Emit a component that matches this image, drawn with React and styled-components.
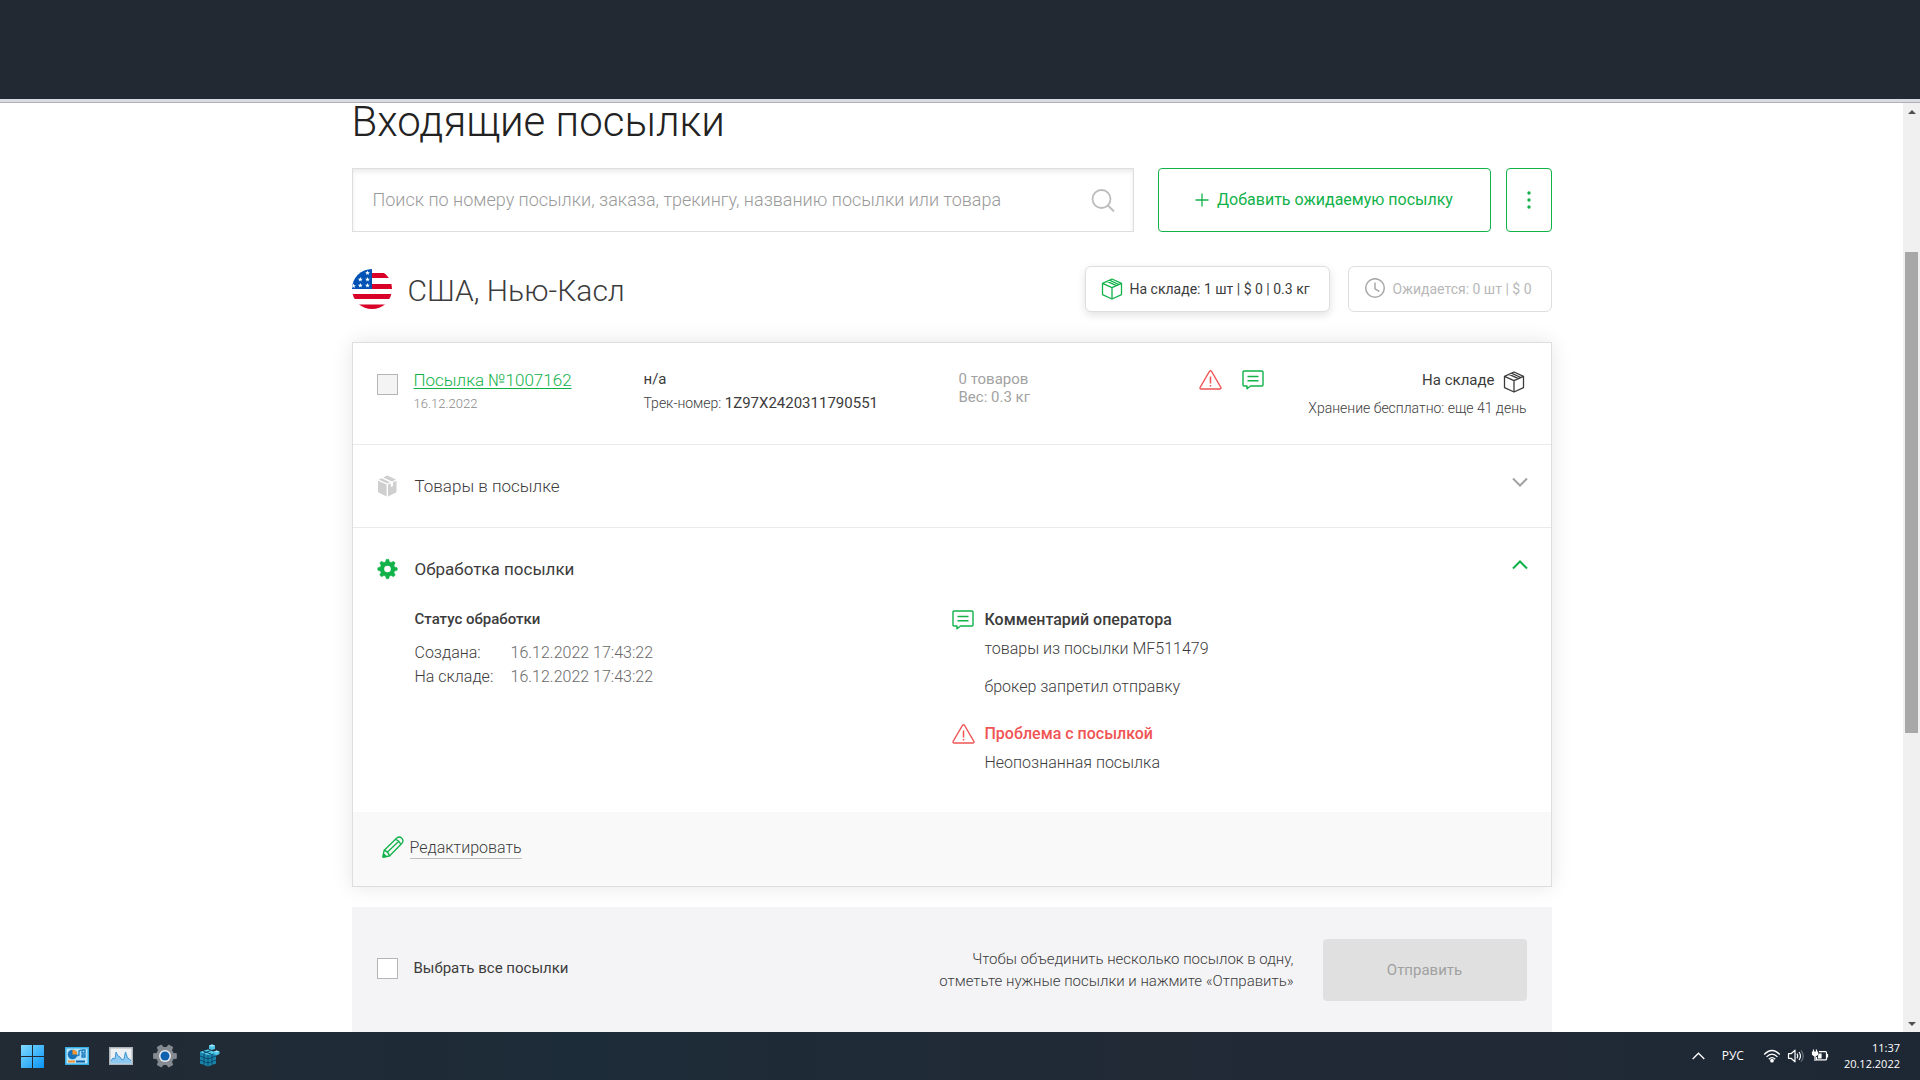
import React from "react";
import styled, { createGlobalStyle } from "styled-components";

const GREEN = "#12b24a";
const RED = "#f05454";
const TEXT = "#3c3c3c";

const GlobalStyle = createGlobalStyle`
  * { box-sizing: border-box; }
  html, body { margin: 0; height: 100%; overflow: hidden; background: #fff; }
  body { font-family: Roboto, "Liberation Sans", sans-serif; color: ${TEXT}; }
  h1, h2, h3, p, dl, dd, dt { margin: 0; font-weight: inherit; }
  button, input { font-family: inherit; }
  svg { display: block; flex: none; }
`;

const Screen = styled.div`
  display: flex;
  flex-direction: column;
  height: 100vh;
`;
const BrowserChrome = styled.div`
  flex: none;
  height: 103px;
  background: #222933;
  border-bottom: 1px solid #b0b0b6;
  box-shadow: inset 0 -3px 0 #dadae2;
`;
const Viewport = styled.div`
  flex: 1;
  min-height: 0;
  display: flex;
`;
const Page = styled.main`
  flex: 1;
  min-width: 0;
`;
const Container = styled.div`
  max-width: 1200px;
  margin: 0 auto;
`;

const Title = styled.h1`
  font-size: 42px;
  line-height: 38px;
  font-weight: 300;
  color: #222;
  margin-bottom: 27px;
`;

const SearchRow = styled.div`
  display: flex;
  margin-bottom: 34px;
`;
const SearchBox = styled.label`
  flex: 1;
  height: 64px;
  display: flex;
  align-items: center;
  padding: 0 18px 0 20px;
  margin-right: 24px;
  border: 1px solid #dedede;
  box-shadow: inset 0 3px 4px #ececec;
`;
const SearchInput = styled.input`
  flex: 1;
  border: 0;
  padding: 0;
  outline: 0;
  background: transparent;
  font-size: 18px;
  line-height: 24px;
  font-weight: 300;
  &::placeholder { color: #9a9a9a; opacity: 1; }
`;
const OutlineButton = styled.button`
  display: flex;
  align-items: center;
  justify-content: center;
  gap: 8px;
  height: 64px;
  width: ${(p) => p.$width};
  padding: 0;
  border: 1px solid ${GREEN};
  border-radius: 4px;
  background: #fff;
  color: ${GREEN};
  font-size: 16px;
  line-height: 24px;
  & + & { margin-left: 15px; }
`;

const CountryRow = styled.div`
  display: flex;
  align-items: center;
  height: 46px;
  margin-bottom: 30px;
`;
const CountryName = styled.h2`
  flex: 1;
  margin-left: 16px;
  padding-top: 4px;
  font-size: 30px;
  line-height: 40px;
  font-weight: 300;
`;
const Counter = styled.button`
  display: flex;
  align-items: center;
  gap: 7px;
  height: 46px;
  padding: 0 19px 0 15px;
  border: 1px solid #dedede;
  border-radius: 6px;
  background: #fff;
  font-size: 14px;
  line-height: 20px;
  color: ${(p) => (p.$active ? TEXT : "#b8b8b8")};
  box-shadow: ${(p) => (p.$active ? "0 3px 8px rgba(0,0,0,.12)" : "none")};
  & + & { margin-left: 18px; }
`;

const Card = styled.article`
  border: 1px solid #dedede;
  background: #fff;
  box-shadow: 0 0 20px rgba(0, 0, 0, 0.1);
  margin-bottom: 20px;
`;
const Summary = styled.div`
  display: grid;
  grid-template-columns: 37px 230px 315px 240px 1fr auto;
  height: 102px;
  padding: 24px 24px 0;
  border-bottom: 1px solid #ebebeb;
`;
const Checkbox = styled.input`
  appearance: none;
  flex: none;
  width: 21px;
  height: 21px;
  margin: ${(p) => (p.$list ? "7px 0 0" : "0")};
  border: 1px solid #b5b5b5;
  background: ${(p) => (p.$list ? "#f4f4f4" : "#fff")};
`;
const Stack = styled.div`
  display: flex;
  flex-direction: column;
  align-items: ${(p) => (p.$end ? "flex-end" : "flex-start")};
`;
const ParcelLink = styled.a`
  color: ${GREEN};
  font-size: 17px;
  line-height: 26px;
  font-weight: 300;
  text-decoration: underline;
  text-decoration-thickness: 1px;
  text-underline-offset: 2px;
`;
const SmallDate = styled.span`
  font-size: 13px;
  line-height: 22px;
  font-weight: 300;
  color: #8a8a8a;
`;
const Line = styled.span`
  font-size: ${(p) => (p.$small ? "14px" : "15px")};
  line-height: 24px;
  font-weight: ${(p) => (p.$light ? 300 : 400)};
`;
const Totals = styled.div`
  display: flex;
  flex-direction: column;
  padding-top: 3px;
  font-size: 15px;
  line-height: 18px;
  color: #a2a2a2;
`;
const Flags = styled.div`
  display: flex;
  gap: 20px;
  padding-top: 3px;
`;
const StatusLine = styled.div`
  display: flex;
  gap: 8px;
  height: 29px;
  padding: 1px 2px 0 0;
  & svg { margin-top: 3px; }
`;

const Section = styled.section`
  border-bottom: ${(p) => (p.$open ? "0" : "1px solid #ebebeb")};
`;
const SectionHead = styled.button`
  display: flex;
  align-items: center;
  width: 100%;
  height: 82px;
  padding: 0 23px 0 24px;
  border: 0;
  background: transparent;
  text-align: left;
  color: ${TEXT};
  & > svg:last-child { margin-bottom: 8px; }
`;
const SectionTitle = styled.span`
  flex: 1;
  margin-left: 17px;
  font-size: 17px;
  line-height: 24px;
  font-weight: ${(p) => (p.$open ? 400 : 300)};
`;
const Details = styled.div`
  display: grid;
  grid-template-columns: 537px 1fr;
  height: 202px;
  padding-left: 62px;
`;
const StatusTitle = styled.h3`
  font-size: 15px;
  line-height: 18px;
  font-weight: 500;
  margin-bottom: 13px;
`;
const StatusList = styled.dl`
  display: grid;
  grid-template-columns: 96px auto;
  font-size: 16px;
  line-height: 24px;
  font-weight: 300;
  & dd { color: #6a6a6a; }
`;
const Note = styled.div`
  display: grid;
  grid-template-columns: 33px 1fr;
  margin-bottom: 25px;
  & > svg { grid-row: span 2; }
`;
const NoteTitle = styled.h3`
  font-size: 16px;
  line-height: 20px;
  font-weight: 500;
  color: ${(p) => (p.$alert ? RED : TEXT)};
`;
const NoteBody = styled.div`
  font-size: 16px;
  line-height: 24px;
  padding-top: 7px;
  font-weight: 300;
  & p + p { margin-top: 14px; }
`;
const CardFooter = styled.footer`
  display: flex;
  align-items: center;
  height: 74px;
  padding: 0 29px 2px;
  background: #f9f9f9;
`;
const EditLink = styled.a`
  display: flex;
  align-items: center;
  gap: 6px;
  color: ${TEXT};
  text-decoration: none;
  font-size: 16px;
  line-height: 20px;
  font-weight: 300;
  & svg { margin-bottom: 3px; }
  & span { border-bottom: 1px solid #bdbdbd; }
`;

const BulkPanel = styled.div`
  display: flex;
  align-items: center;
  height: 126px;
  padding: 0 25px;
  background: #f4f4f6;
`;
const SelectAll = styled.label`
  display: flex;
  align-items: center;
  gap: 16px;
  flex: 1;
  padding-bottom: 4px;
  font-size: 15px;
  line-height: 20px;
`;
const Hint = styled.p`
  text-align: right;
  font-size: 15px;
  line-height: 22px;
  font-weight: 300;
  margin-right: 29px;
`;
const SubmitButton = styled.button`
  width: 204px;
  height: 62px;
  border: 0;
  border-radius: 4px;
  background: #e0e0e0;
  color: #a0a0a0;
  font-size: 15px;
`;

const Scrollbar = styled.div`
  flex: none;
  width: 17px;
  display: grid;
  grid-template-rows: 17px 132fr 481fr 282fr 17px;
  justify-items: center;
  align-items: center;
  background: #f0f0f0;
`;
const Thumb = styled.div`
  grid-row: 3;
  width: 13px;
  height: 100%;
  background: #a8a8a8;
`;
const Arrow = styled.div`
  grid-row: ${(p) => (p.$down ? 5 : 1)};
  border: 4px solid transparent;
  border-top: ${(p) => (p.$down ? "4px solid #505050" : "0")};
  border-bottom: ${(p) => (p.$down ? "0" : "4px solid #505050")};
`;

const Taskbar = styled.footer`
  flex: none;
  height: 48px;
  display: flex;
  align-items: center;
  padding: 0 20px 0 21px;
  z-index: 1;
  background: linear-gradient(90deg, #222a33, #1d2c39 30%, #212a35 60%, #1e2835);
  color: #fff;
  font-family: "Open Sans", "Noto Sans", sans-serif;
  font-size: 11px;
  line-height: 16px;
`;
const Apps = styled.div`
  display: flex;
  gap: 20px;
  flex: 1;
`;
const IconButton = styled.button`
  padding: 0;
  border: 0;
  background: transparent;
  color: inherit;
  font: inherit;
`;
const Tray = styled.div`
  display: flex;
  align-items: center;
`;
const Language = styled.span`
  margin: 0 19px 0 17px;
  font-size: 12px;
`;
const TrayIcons = styled.div`
  display: flex;
  gap: 6px;
  margin-right: 15px;
`;
const Clock = styled.div`
  text-align: right;
`;

const Box = ({ size, color, w = 1.3 }) => (
  <svg width={size} height={size} viewBox="0 0 22 22" fill="none" stroke={color} strokeWidth={w} strokeLinejoin="round" aria-hidden="true">
    <path d="M11 1 20.5 5.3V16.6L11 21 1.5 16.6V5.3ZM1.5 5.3 11 9.6 20.5 5.3M11 9.6V21M6 3.3 15.5 7.6M8.4 2.2 17.8 6.5" />
  </svg>
);
const SolidBox = () => (
  <svg width="21" height="22" viewBox="0 0 21 22" aria-hidden="true">
    <path d="M1 5.700 9.600 9.600V21.500L1 17.300ZM11 9.600 13.800 8.300V12L16 11V7.300L19.500 5.700V17.300L11 21.500Z" fill="#cfcfcf" />
    <path d="M1.600 4.600 4.600 3.200 13 7.200 10.300 8.500ZM6.100 2.500 10.300.6 19 4.600 15 6.400Z" fill="#cfcfcf" />
  </svg>
);
const Search = () => (
  <svg width="24" height="24" viewBox="0 0 24 24" fill="none" stroke="#bcbcbc" strokeWidth="1.8" aria-hidden="true">
    <circle cx="10.5" cy="11" r="9" />
    <path d="m17 17.5 6 6" />
  </svg>
);
const ClockIcon = () => (
  <svg width="22" height="22" viewBox="0 0 22 22" fill="none" stroke="#a9a9a9" strokeWidth="1.5" aria-hidden="true">
    <circle cx="11" cy="10" r="9.3" />
    <path d="M11 4.500v6.400l4.400 2.600" />
  </svg>
);
const Warning = () => (
  <svg width="23" height="20" viewBox="0 0 23 20" fill="none" stroke={RED} strokeWidth="1.3" strokeLinejoin="round" aria-hidden="true">
    <path d="M10.6 1.2q.9-.9 1.8 0L22 17.6q.3 1.1-.9 1.4H1.9Q.7 18.700 1 17.600Z" />
    <path d="M11.500 6.500v7M11.500 15v1.600" strokeWidth="1.500" />
  </svg>
);
const Message = () => (
  <svg width="22" height="20" viewBox="0 0 22 20" fill="none" stroke={GREEN} strokeWidth="1.4" strokeLinejoin="round" aria-hidden="true">
    <path d="M2 1h18q1 0 1 1v13q0 1-1 1H8.500L5 18.800V16H2q-1 0-1-1V2q0-1 1-1Z" />
    <path d="M5.500 6.500h11M5.500 10.700h11" />
  </svg>
);
const Chevron = ({ up }) => (
  <svg width="16" height="10" viewBox="0 0 16 10" fill="none" stroke={up ? GREEN : "#a3a3a3"} strokeWidth="2" aria-hidden="true">
    <path d={up ? "m1 8.500 7-7 7 7" : "m1 1.500 7 7 7-7"} />
  </svg>
);
const gearPath = (cx, cy, n, outer, inner, tw, rw) => {
  const pts = [];
  for (let i = 0; i < n; i++) {
    const a = (i * 2 * Math.PI) / n - Math.PI / 2;
    [[inner, -rw], [outer, -tw], [outer, tw], [inner, rw]].forEach(([r, d]) =>
      pts.push(`${(cx + r * Math.cos(a + d)).toFixed(2)} ${(cy + r * Math.sin(a + d)).toFixed(2)}`)
    );
  }
  return `M${pts.join("L")}Z`;
};
const Gear = () => (
  <svg width="21" height="22" viewBox="0 0 21 22" aria-hidden="true">
    <path d={gearPath(10.5, 11, 8, 9.8, 7.4, 0.12, 0.28)} fill={GREEN} stroke={GREEN} strokeWidth=".5" strokeLinejoin="round" />
    <circle cx="10.500" cy="11" r="3.300" fill="#fff" />
  </svg>
);
const Pencil = () => (
  <svg width="22" height="22" viewBox="0 0 22 22" fill="none" stroke={GREEN} strokeWidth="1.3" strokeLinejoin="round" aria-hidden="true">
    <path d="M1 21 2 14.500 14.800 2Q17.500-.2 19.800 2.200T20 7.200L7.500 20ZM2 14.500Q6 15 7.500 20M13.500 3.300Q17.500 4.600 18.700 8.500M5.300 16.300 16.800 5.200" />
    <path d="M1 21 1.500 17.800 4.200 20.500Z" fill={GREEN} />
  </svg>
);
const Star = ({ x, y }) => (
  <path transform={`translate(${x} ${y})`} fill="#fff" d="M0-2.400.7-.7 2.400-.7 1 .4 1.500 2.100 0 1.100-1.500 2.100-1 .4-2.400-.7-.7-.7Z" />
);
const Flag = () => (
  <svg width="40" height="40" viewBox="0 0 40 40" role="img" aria-label="США">
    <clipPath id="flag"><circle cx="20" cy="20" r="20" /></clipPath>
    <g clipPath="url(#flag)">
      <path fill="#fff" d="M0 0h40v40H0z" />
      <path fill="#d80027" d="M20 4h20v5H20zM20 15h20v5H20zM0 25h40v5H0zM0 35.500h40v5H0z" />
      <path fill="#0052b4" d="M0 0h20v20H0z" />
      <Star x="15.500" y="4" /><Star x="8.300" y="10.500" /><Star x="15.500" y="10.500" />
      <Star x="1.500" y="17" /><Star x="8.300" y="16.500" /><Star x="15.500" y="16.500" />
    </g>
  </svg>
);

const WindowsLogo = () => (
  <svg width="24" height="24" viewBox="0 0 24 24" aria-hidden="true">
    <defs><linearGradient id="win" x2="1" y2="1"><stop stopColor="#7fdcff" /><stop offset="1" stopColor="#0a93f5" /></linearGradient></defs>
    <path fill="url(#win)" d="M0 1h11v11H0zM12 1h11v11H12zM0 13h11v11H0zM12 13h11v11H12z" />
  </svg>
);
const ControlPanel = () => (
  <svg width="24" height="24" viewBox="0 0 24 24" aria-hidden="true">
    <path fill="#35aee8" d="M0 3h24v18H0z" />
    <path fill="#b5e4fa" d="M1.500 4.500h21v15h-21z" />
    <circle cx="7.500" cy="10.500" r="4.800" fill="#1473ba" />
    <path fill="#f6932a" d="M7.500 10.500V5.700a4.800 4.800 0 0 1 4.800 4.800Z" />
    <path stroke="#1679bd" strokeWidth="1.300" fill="none" d="m12 12 2-1V7l2-1m1 0h3v3h-3zm0 5h3v2h-3z" />
    <path fill="#f6932a" d="M3 16.500h7v2H3z" /><path fill="#0f5fa5" d="M11 16.500h9v2h-9z" />
  </svg>
);
const Monitor = () => (
  <svg width="24" height="24" viewBox="0 0 24 24" aria-hidden="true">
    <path fill="#aeb4b9" d="M0 3h24v18H0z" /><path fill="#eef1f3" d="M1.500 4.500h21v15h-21z" />
    <path fill="#8cc8f0" d="M1.500 19.500V17L4 14 6 15 7 8 9 12 11 13 13 16 15 15 16.500 7 18.500 14 20.500 15 22.500 18V19.500Z" />
    <path stroke="#3f97d3" strokeWidth="1" fill="none" d="M2 17 4 14 6 15 7 8 9 12 11 13 13 16 15 15 16.500 8 18.500 14 20.500 15 22 17" />
  </svg>
);
const Settings = () => (
  <svg width="24" height="24" viewBox="0 0 24 24" aria-hidden="true">
    <path d={gearPath(12, 12, 6, 11.5, 8.6, 0.19, 0.34)} transform="rotate(30 12 12)" fill="#858b91" stroke="#858b91" strokeLinejoin="round" />
    <circle cx="12" cy="12" r="6" fill="#e9edf0" /><circle cx="12" cy="12" r="4.500" fill="#1062b0" />
  </svg>
);
const Registry = () => (
  <svg width="24" height="24" viewBox="0 0 24 24" aria-hidden="true">
    <path fill="#1b86ad" d="m3 8 8-2.500 8 3v11L11 22.500 3 19.500Z" />
    <path fill="#58cbe8" d="m3 8 8-2.500 8 3-8 2.500Z" />
    <path stroke="#0a4a6b" strokeWidth="1" fill="none" d="M3 12l8 3 8-3M3 16l8 3 8-3M11 11v11M7 9.500V21M15 10v11M6 7l8 3M14 6.500 7 9" />
    <path fill="#4fc3e8" d="m12 1.500 3-1 3 1V5l-3 1-3-1Zm5 6 2.500-1 3 1V10l-3 1.500L17 10Z" />
    <path fill="#9ee8f8" d="m12 1.500 3-1 3 1-3 1.200Zm5 6 2.500-1 3 1-3 1Z" />
  </svg>
);
const TrayChevron = () => (
  <svg width="13" height="8" viewBox="0 0 13 8" fill="none" stroke="#fff" strokeWidth="1.300" aria-hidden="true"><path d="m.7 7 5.800-5.800L12.300 7" /></svg>
);
const Wifi = () => (
  <svg width="18" height="16" viewBox="0 0 18 16" fill="none" stroke="#fff" strokeWidth="1.300" aria-hidden="true">
    <path d="M1.200 6.500Q9-1.500 16.800 6.500M3.500 8.900Q9 3.400 14.500 8.900M5.800 11.200Q9 8 12.200 11.200" /><circle cx="9" cy="12.700" r="1.200" fill="#fff" />
  </svg>
);
const Volume = () => (
  <svg width="18" height="16" viewBox="0 0 18 16" fill="none" stroke="#fff" strokeWidth="1.200" strokeLinejoin="round" aria-hidden="true">
    <path d="M1.500 5.700H4L8 2.200V13.800L4 10.300H1.500ZM10 5.700q1.500 2.300 0 4.600M12 4q3 4 0 8" /><path d="M14 2.300q4.500 5.700 0 11.400" stroke="#68717c" />
  </svg>
);
const Battery = () => (
  <svg width="18" height="16" viewBox="0 0 18 16" fill="none" stroke="#fff" strokeWidth="1.200" aria-hidden="true">
    <path d="M8 3.600h6.500q1 0 1 1v6.300q0 1-1 1H5.500V9M16.500 6v3.500M2.500 1.500v3M5.500 1.500v3" /><path fill="#fff" d="M1.500 4h5v2.500l-2 1.500h-1l-2-1.500ZM4 8v5M8 6h2v4H7.500z" />
  </svg>
);

const dates = [
  ["Создана:", "16.12.2022 17:43:22"],
  ["На складе:", "16.12.2022 17:43:22"],
];
const apps = [
  ["Пуск", WindowsLogo],
  ["Панель управления", ControlPanel],
  ["Монитор ресурсов", Monitor],
  ["Параметры", Settings],
  ["Редактор реестра", Registry],
];

export default function App() {
  return (
    <Screen>
      <GlobalStyle />
      <BrowserChrome />
      <Viewport>
        <Page>
          <Container>
            <Title>Входящие посылки</Title>
            <SearchRow>
              <SearchBox>
                <SearchInput
                  type="text"
                  aria-label="Поиск"
                  placeholder="Поиск по номеру посылки, заказа, трекингу, названию посылки или товара"
                />
                <Search />
              </SearchBox>
              <OutlineButton $width="333px">
                <svg width="14" height="14" viewBox="0 0 14 14" stroke={GREEN} strokeWidth="1.300" aria-hidden="true"><path d="M7 .5v13M.5 7h13" /></svg>
                Добавить ожидаемую посылку
              </OutlineButton>
              <OutlineButton $width="46px" aria-label="Ещё">
                <svg width="4" height="18" viewBox="0 0 4 18" fill={GREEN} aria-hidden="true"><circle cx="2" cy="2" r="1.700" /><circle cx="2" cy="9" r="1.700" /><circle cx="2" cy="16" r="1.700" /></svg>
              </OutlineButton>
            </SearchRow>

            <CountryRow>
              <Flag />
              <CountryName>США, Нью-Касл</CountryName>
              <Counter $active><Box size={22} color={GREEN} />На складе: 1 шт | $ 0 | 0.3 кг</Counter>
              <Counter><ClockIcon />Ожидается: 0 шт | $ 0</Counter>
            </CountryRow>

            <Card>
              <Summary>
                <Checkbox type="checkbox" $list aria-label="Посылка №1007162" />
                <Stack>
                  <ParcelLink href="#">Посылка №1007162</ParcelLink>
                  <SmallDate>16.12.2022</SmallDate>
                </Stack>
                <Stack>
                  <Line>н/a</Line>
                  <Line $small $light>Трек-номер: <Line>1Z97X2420311790551</Line></Line>
                </Stack>
                <Totals>
                  <span>0 товаров</span>
                  <span>Вес: 0.3 кг</span>
                </Totals>
                <Flags><Warning /><Message /></Flags>
                <Stack $end>
                  <StatusLine><Line>На складе</Line><Box size={22} color={TEXT} /></StatusLine>
                  <Line $small $light>Хранение бесплатно: еще 41 день</Line>
                </Stack>
              </Summary>

              <Section>
                <SectionHead aria-expanded="false">
                  <SolidBox />
                  <SectionTitle>Товары в посылке</SectionTitle>
                  <Chevron />
                </SectionHead>
              </Section>

              <Section $open>
                <SectionHead aria-expanded="true">
                  <Gear />
                  <SectionTitle $open>Обработка посылки</SectionTitle>
                  <Chevron up />
                </SectionHead>
                <Details>
                  <div>
                    <StatusTitle>Статус обработки</StatusTitle>
                    <StatusList>
                      {dates.map(([k, v]) => (
                        <React.Fragment key={k}><dt>{k}</dt><dd>{v}</dd></React.Fragment>
                      ))}
                    </StatusList>
                  </div>
                  <div>
                    <Note>
                      <Message />
                      <NoteTitle>Комментарий оператора</NoteTitle>
                      <NoteBody><p>товары из посылки MF511479</p><p>брокер запретил отправку</p></NoteBody>
                    </Note>
                    <Note>
                      <Warning />
                      <NoteTitle $alert>Проблема с посылкой</NoteTitle>
                      <NoteBody><p>Неопознанная посылка</p></NoteBody>
                    </Note>
                  </div>
                </Details>
              </Section>

              <CardFooter>
                <EditLink href="#"><Pencil /><span>Редактировать</span></EditLink>
              </CardFooter>
            </Card>

            <BulkPanel>
              <SelectAll><Checkbox type="checkbox" />Выбрать все посылки</SelectAll>
              <Hint>Чтобы объединить несколько посылок в одну,<br />отметьте нужные посылки и нажмите «Отправить»</Hint>
              <SubmitButton disabled>Отправить</SubmitButton>
            </BulkPanel>
          </Container>
        </Page>
        <Scrollbar aria-hidden="true"><Arrow /><Thumb /><Arrow $down /></Scrollbar>
      </Viewport>
      <Taskbar>
        <Apps>
          {apps.map(([name, Icon]) => (
            <IconButton key={name} aria-label={name}><Icon /></IconButton>
          ))}
        </Apps>
        <Tray>
          <IconButton aria-label="Скрытые значки"><TrayChevron /></IconButton>
          <Language>РУС</Language>
          <TrayIcons><Wifi /><Volume /><Battery /></TrayIcons>
          <Clock>11:37<br />20.12.2022</Clock>
        </Tray>
      </Taskbar>
    </Screen>
  );
}
